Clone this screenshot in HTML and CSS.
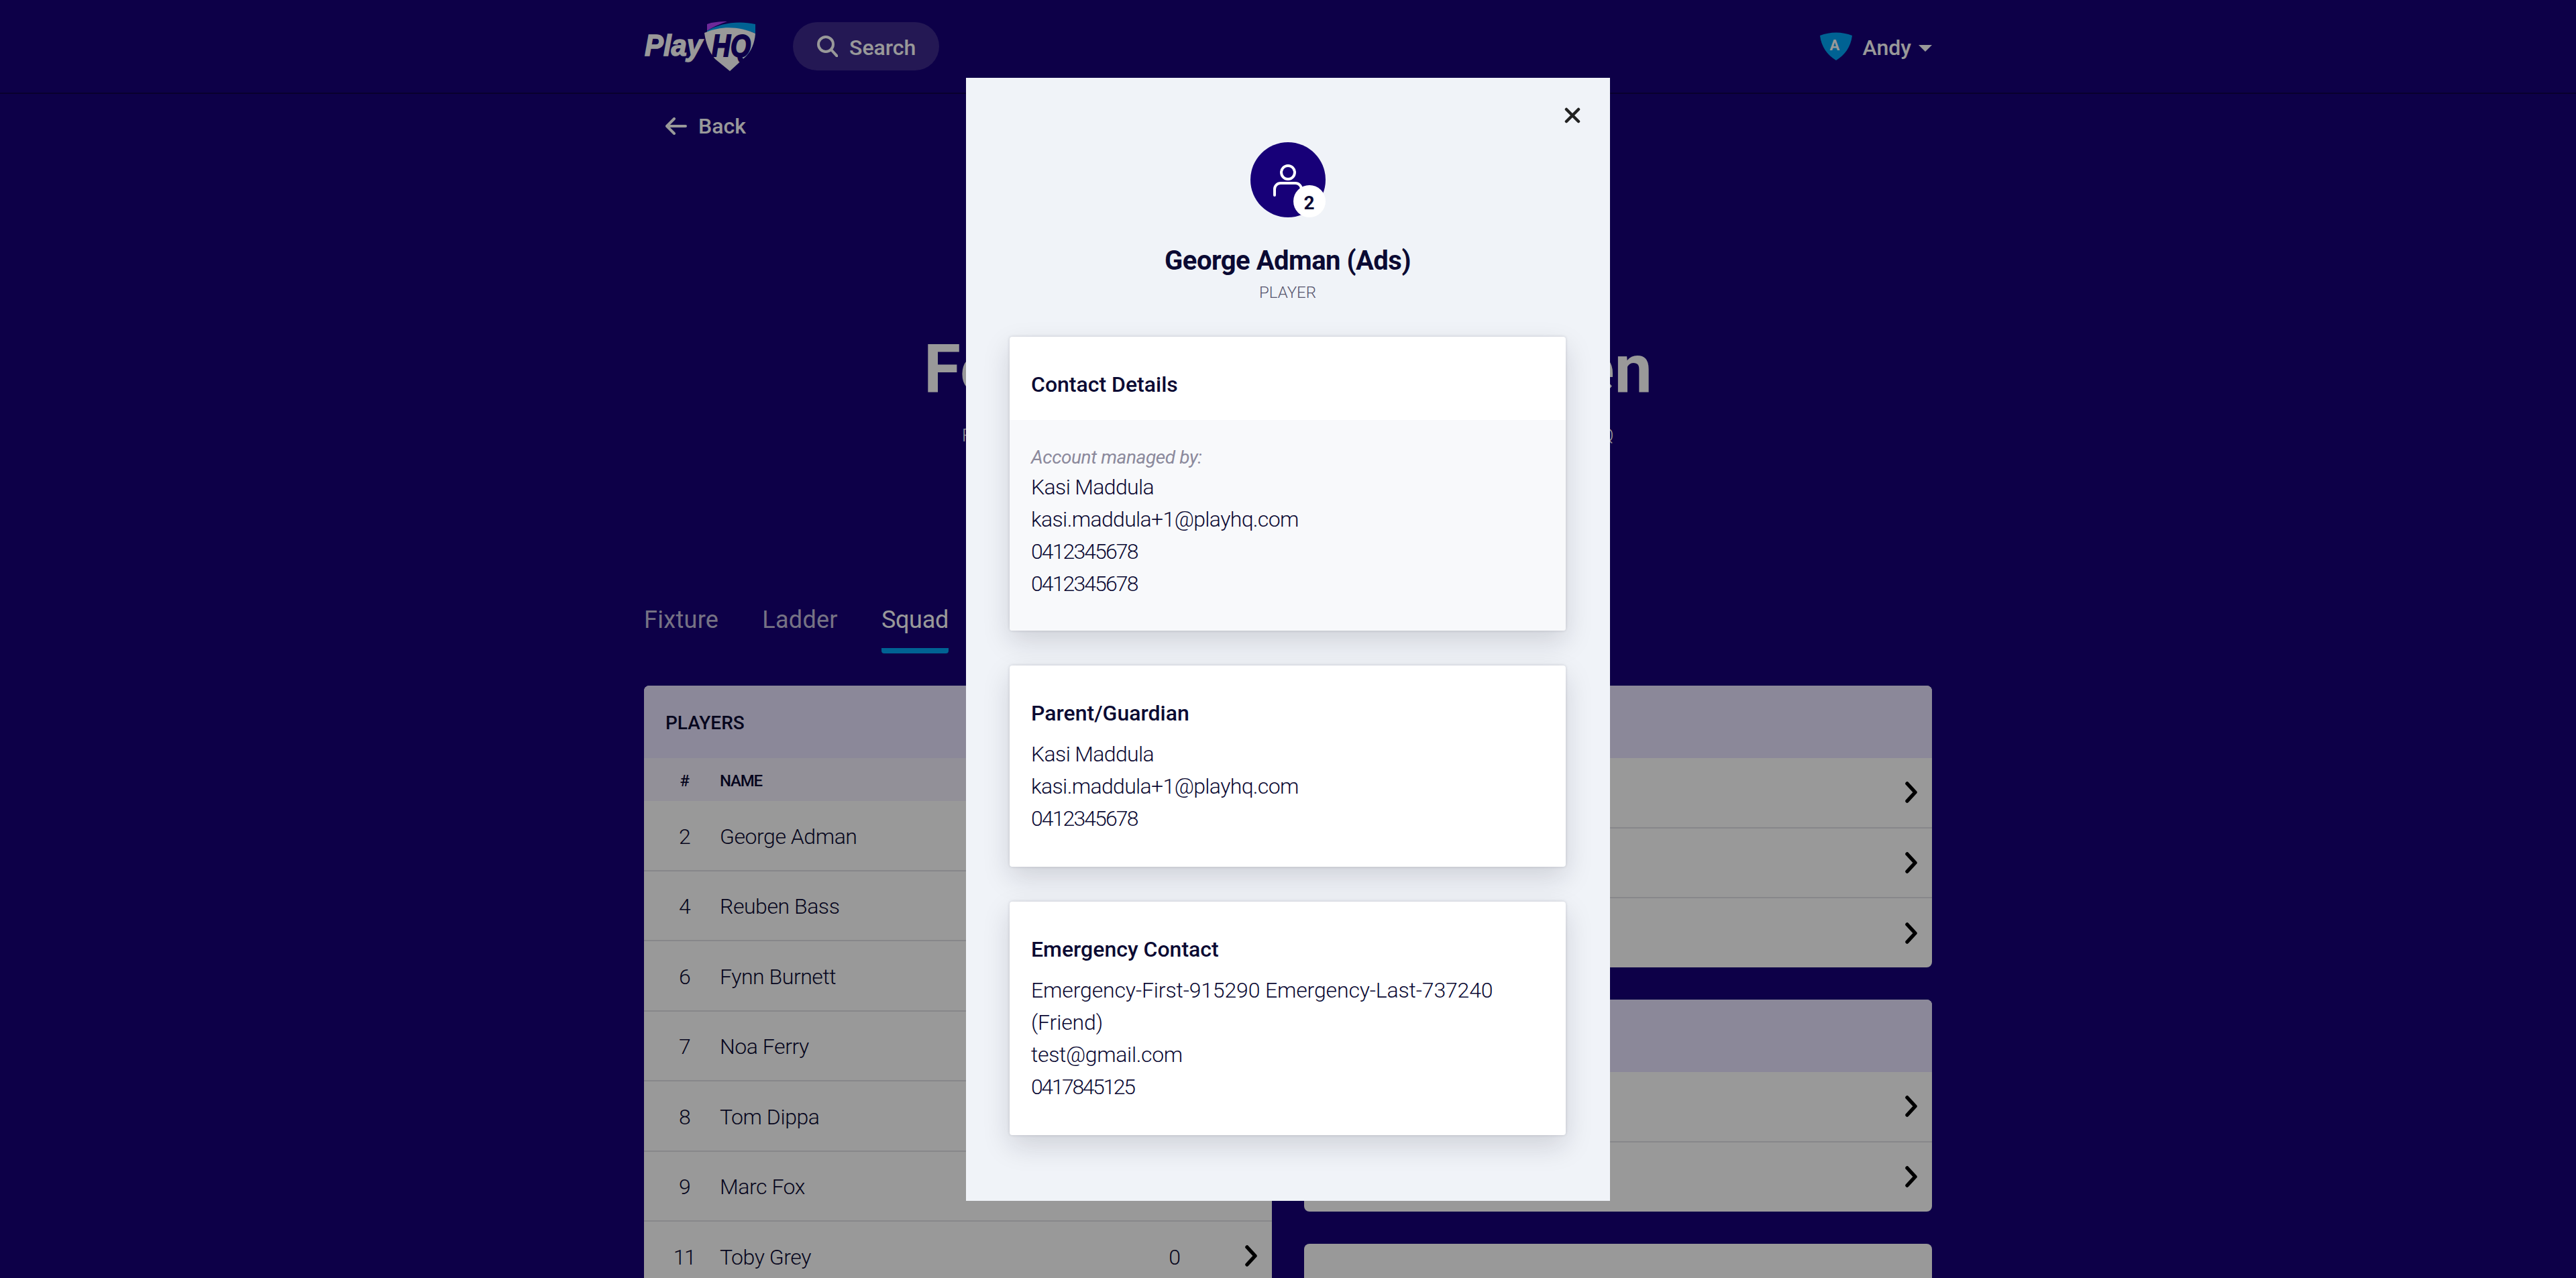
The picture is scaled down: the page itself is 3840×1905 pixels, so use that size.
FILE: index.html
```html
<!DOCTYPE html>
<html lang="en">
<head>
    <meta charset="UTF-8">
    <title>Squad</title>
<link rel="stylesheet" href="styles.css">
</head>
<body>
    <header class="topbar">
        <div class="topbar-inner">
            <svg class="logo" viewBox="0 0 166 74" width="166" height="74">
                <path d="M94 4C102 1 112 0 124 0C118 2 104 7 94 14Z" fill="#b845ff"/>
                <path d="M94 14C112 3 140-2 166 4V18C142 8 116 8 94 17Z" fill="#00a3f5"/>
                <path d="M90 17C115 6 142 7 166 18C165 32 160 44 152 52L128 74L106 56C97 46 92 32 90 17Z" fill="#fff"/>
                <text class="logo-play" x="1" y="51" textLength="86" lengthAdjust="spacingAndGlyphs">Play</text>
                <text class="logo-hq" x="101" y="52" textLength="58" lengthAdjust="spacingAndGlyphs">HQ</text>
            </svg>
            <div class="search">
                <svg viewBox="0 0 32 32" width="32" height="32" fill="none" stroke="#fff" stroke-width="4" stroke-linecap="round"><circle cx="14" cy="13" r="11"/><path d="M22 21l9 10"/></svg>
                <span class="nudge">Search</span>
            </div>
            <div class="user">
                <svg viewBox="0 0 48 42" width="48" height="42"><path d="M0 5C15-1 33-1 48 5C46 22 37 34 24 42C11 34 2 22 0 5Z" fill="#00a3f5"/></svg>
                <span class="user-initial">A</span>
                <span class="user-name nudge">Andy</span>
                <span class="caret"></span>
            </div>
        </div>
    </header>

    <div class="wrap">
        <div class="back">
            <svg viewBox="0 0 32 26" width="32" height="26" fill="none" stroke="#fff" stroke-width="4" stroke-linecap="round" stroke-linejoin="round"><path d="M30 13H3M13 2L2 13l11 11"/></svg>
            <span>Back</span>
        </div>

        <div class="hero">
            <h1>Football Grade One Men</h1>
            <p>Fixture, ladder and squad details for this season's competition, hosted on PlayHQ</p>
        </div>

        <nav class="tabs">
            <span class="tab">Fixture</span>
            <span class="tab">Ladder</span>
            <span class="tab tab-active">Squad</span>
        </nav>

        <div class="columns">
            <section class="panel">
                <div class="panel-head">PLAYERS</div>
                <div class="table-head"><span class="col-num">#</span><span class="col-label">NAME</span></div>
                <div class="row"><span class="col-num">2</span><span class="col-name">George Adman</span><span class="col-val">0</span><svg class="chev" viewBox="0 0 18 32"><path d="M3 3l12 13L3 29"/></svg></div>
                <div class="row"><span class="col-num">4</span><span class="col-name">Reuben Bass</span><span class="col-val">0</span><svg class="chev" viewBox="0 0 18 32"><path d="M3 3l12 13L3 29"/></svg></div>
                <div class="row"><span class="col-num">6</span><span class="col-name">Fynn Burnett</span><span class="col-val">0</span><svg class="chev" viewBox="0 0 18 32"><path d="M3 3l12 13L3 29"/></svg></div>
                <div class="row"><span class="col-num">7</span><span class="col-name">Noa Ferry</span><span class="col-val">0</span><svg class="chev" viewBox="0 0 18 32"><path d="M3 3l12 13L3 29"/></svg></div>
                <div class="row"><span class="col-num">8</span><span class="col-name">Tom Dippa</span><span class="col-val">0</span><svg class="chev" viewBox="0 0 18 32"><path d="M3 3l12 13L3 29"/></svg></div>
                <div class="row"><span class="col-num">9</span><span class="col-name">Marc Fox</span><span class="col-val">0</span><svg class="chev" viewBox="0 0 18 32"><path d="M3 3l12 13L3 29"/></svg></div>
                <div class="row"><span class="col-num">11</span><span class="col-name">Toby Grey</span><span class="col-val">0</span><svg class="chev" viewBox="0 0 18 32"><path d="M3 3l12 13L3 29"/></svg></div>
            </section>

            <div class="side">
                <section class="panel">
                    <div class="panel-head"></div>
                    <div class="row"><svg class="chev" viewBox="0 0 18 32"><path d="M3 3l12 13L3 29"/></svg></div>
                    <div class="row"><svg class="chev" viewBox="0 0 18 32"><path d="M3 3l12 13L3 29"/></svg></div>
                    <div class="row row-last"><svg class="chev" viewBox="0 0 18 32"><path d="M3 3l12 13L3 29"/></svg></div>
                </section>
                <section class="panel">
                    <div class="panel-head"></div>
                    <div class="row"><svg class="chev" viewBox="0 0 18 32"><path d="M3 3l12 13L3 29"/></svg></div>
                    <div class="row row-last"><svg class="chev" viewBox="0 0 18 32"><path d="M3 3l12 13L3 29"/></svg></div>
                </section>
                <section class="panel panel-empty"></section>
            </div>
        </div>
    </div>

    <div class="overlay"></div>

    <div class="modal">
        <svg class="close" viewBox="0 0 24 24" width="24" height="24"><path d="M3 3l18 18M21 3L3 21"/></svg>
        <div class="avatar">
            <svg viewBox="0 0 112 112" width="112" height="112" fill="none" stroke="#fff" stroke-width="4" stroke-linecap="round"><circle cx="56" cy="45" r="10"/><path d="M36 79V70a9 9 0 0 1 9-9h22a9 9 0 0 1 9 9v9"/></svg>
            <span class="avatar-badge">2</span>
        </div>
        <h2 class="player-name">George Adman (Ads)</h2>
        <div class="player-role">PLAYER</div>

        <div class="card">
            <div class="card-title card-title-solo">Contact Details</div>
            <div class="card-body card-body-tint">
                <div class="managed">Account managed by:</div>
                <div>Kasi Maddula</div>
                <div>kasi.maddula+1@playhq.com</div>
                <div class="phone">0412345678</div>
                <div class="phone">0412345678</div>
            </div>
        </div>

        <div class="card">
            <div class="card-title">Parent/Guardian</div>
            <div class="card-body">
                <div>Kasi Maddula</div>
                <div>kasi.maddula+1@playhq.com</div>
                <div class="phone">0412345678</div>
            </div>
        </div>

        <div class="card">
            <div class="card-title">Emergency Contact</div>
            <div class="card-body">
                <div class="long-line">Emergency-First-915290 Emergency-Last-737240 (Friend)</div>
                <div class="mail">test@gmail.com</div>
                <div class="phone phone-tight">0417845125</div>
            </div>
        </div>
    </div>
</body>
</html>
```

FILE: styles.css
```css
html, body{
    height: 100%;
    overflow: hidden;
}
body{
    margin: 0;
    background-color: #170078;
    color: #0b0a33;
    font-family: Roboto, "Noto Sans", sans-serif;
    font-size: 32px;
}

/* top bar */
.topbar{
    height: 138px;
    border-bottom: 2px solid rgba(0,0,0,0.35);
}
.topbar-inner{
    width: 1920px;
    height: 100%;
    margin: 0 auto;
    display: flex;
    align-items: center;
    color: #fff;
}
.logo-play, .logo-hq{
    font-family: "Liberation Sans", sans-serif;
    font-weight: 700;
    font-style: italic;
}
.logo-play{
    font-size: 45px;
    fill: #fff;
    stroke: #fff;
    stroke-width: 1.5;
}
.logo-hq{
    font-size: 46px;
    fill: #170078;
    stroke: #170078;
    stroke-width: 2;
}
.search{
    width: 218px;
    height: 72px;
    margin-left: 56px;
    padding-left: 35px;
    box-sizing: border-box;
    border-radius: 36px;
    background-color: rgba(255,255,255,0.16);
    display: flex;
    align-items: center;
    gap: 17px;
    font-weight: 500;
}
.nudge{
    padding-top: 3px;
}
.user{
    margin-left: auto;
    position: relative;
    display: flex;
    align-items: center;
    font-weight: 500;
}
.user-initial{
    position: absolute;
    left: 15px;
    top: 7px;
    font-size: 22px;
    font-weight: 700;
    color: #fff;
}
.user-name{
    margin-left: 16px;
}
.caret{
    width: 0;
    height: 0;
    margin-left: 11px;
    margin-top: 6px;
    border-left: 10px solid transparent;
    border-right: 10px solid transparent;
    border-top: 10px solid #fff;
}

/* page body */
.wrap{
    width: 1920px;
    margin: 0 auto;
}
.back{
    height: 96px;
    padding-left: 32px;
    display: flex;
    align-items: center;
    gap: 17px;
    color: #fff;
    font-weight: 500;
}
.hero{
    height: 665px;
    color: #fff;
    text-align: center;
}
.hero h1{
    margin: 0;
    padding-top: 256px;
    font-size: 100px;
    line-height: 116px;
    font-weight: 700;
    letter-spacing: 0.2px;
    white-space: nowrap;
}
.hero p{
    margin: 26px 0 0;
    font-size: 26px;
    line-height: 30px;
    font-weight: 300;
    letter-spacing: 0.7px;
    white-space: nowrap;
}
.tabs{
    height: 121px;
    display: flex;
    gap: 65px;
    color: rgba(255,255,255,0.75);
    font-size: 36px;
    letter-spacing: 0.3px;
}
.tab{
    height: 63px;
    padding-top: 2px;
    line-height: 42px;
}
.tab-active{
    color: #fff;
    border-bottom: 8px solid #00a3f5;
    border-radius: 0 0 4px 4px;
    letter-spacing: -0.3px;
}

.columns{
    display: grid;
    grid-template-columns: 936px 936px;
    gap: 48px;
}
.side{
    display: flex;
    flex-direction: column;
    gap: 48px;
}
.panel{
    background-color: #fff;
    border-radius: 8px;
    overflow: hidden;
}
.panel-empty{
    height: 200px;
}
.panel-head{
    height: 108px;
    padding: 3px 0 0 32px;
    box-sizing: border-box;
    background-color: #e8e3ff;
    display: flex;
    align-items: center;
    font-size: 28px;
    font-weight: 500;
}
.table-head{
    height: 64px;
    padding-top: 3px;
    box-sizing: border-box;
    background-color: #f3f0fe;
    display: flex;
    align-items: center;
    font-size: 24px;
    font-weight: 500;
}
.col-label{
    letter-spacing: -1.2px;
}
.col-num{
    width: 113px;
    padding-left: 7px;
    box-sizing: border-box;
    text-align: center;
    letter-spacing: -1.5px;
}
.row{
    height: 104.5px;
    box-sizing: border-box;
    border-bottom: 2px solid #e1e1e6;
    padding-right: 22px;
    display: flex;
    align-items: center;
    font-weight: 350;
}
.row-last{
    height: 103px;
    border-bottom: 0;
}
.row span{
    padding-top: 3px;
}
.col-name{
    flex: 1;
    letter-spacing: -0.45px;
}
.col-val{
    margin-right: 96px;
}
.chev{
    width: 18px;
    height: 32px;
    margin-left: auto;
    fill: none;
    stroke: #000;
    stroke-width: 5.5;
    stroke-linecap: round;
    stroke-linejoin: round;
}

/* modal on top of the dimmed page */
.overlay{
    position: fixed;
    top: 0;
    left: 0;
    right: 0;
    bottom: 0;
    background-color: rgba(0,0,0,0.4);
}
.modal{
    position: fixed;
    top: 116px;
    left: 1440px;
    width: 960px;
    height: 1674px;
    box-sizing: border-box;
    padding: 96px 66px 0 65px;
    background-color: #f0f3f8;
    display: flex;
    flex-direction: column;
}
.close{
    position: absolute;
    top: 44px;
    right: 44px;
    fill: none;
    stroke: #222;
    stroke-width: 4.5;
    stroke-linecap: round;
}
.avatar{
    width: 112px;
    height: 112px;
    margin: 0 auto;
    position: relative;
    border-radius: 50%;
    background-color: #170078;
}
.avatar-badge{
    position: absolute;
    right: 0;
    bottom: 0;
    width: 48px;
    height: 48px;
    padding-top: 5px;
    box-sizing: border-box;
    border-radius: 50%;
    background-color: #fff;
    display: flex;
    align-items: center;
    justify-content: center;
    font-size: 28px;
    font-weight: 700;
}
.player-name{
    margin: 41px 0 0;
    text-align: center;
    font-size: 40px;
    line-height: 48px;
    font-weight: 700;
    letter-spacing: -0.5px;
}
.player-role{
    margin-top: 7px;
    margin-bottom: 50px;
    text-align: center;
    font-size: 24px;
    line-height: 32px;
    font-weight: 350;
    color: #55536c;
}
.card{
    margin-bottom: 52px;
    background-color: #fff;
    border-radius: 4px;
    box-shadow: 0 16px 40px rgba(20,20,40,0.15), 0 0 4px rgba(20,20,40,0.16);
}
.card-title{
    padding: 51px 32px 17px;
    font-size: 32px;
    line-height: 40px;
    font-weight: 500;
}
.card-title-solo{
    padding-bottom: 33px;
    height: 124px;
    box-sizing: border-box;
}
.card-body{
    padding: 0 32px 48px;
    line-height: 48px;
    font-size: 32px;
    font-weight: 350;
    letter-spacing: -0.65px;
}
.card-body-tint{
    padding: 36px 32px 46px;
    background-color: #f8f9fb;
    border-radius: 0 0 4px 4px;
}
.managed{
    font-size: 28px;
    line-height: 40px;
    font-style: italic;
    font-weight: 400;
    letter-spacing: -0.4px;
    color: #8b899c;
}
.phone{
    letter-spacing: -1.9px;
}
.phone-tight{
    letter-spacing: -2.4px;
}
.long-line{
    letter-spacing: -0.15px;
}
.mail{
    letter-spacing: -0.35px;
}
```
